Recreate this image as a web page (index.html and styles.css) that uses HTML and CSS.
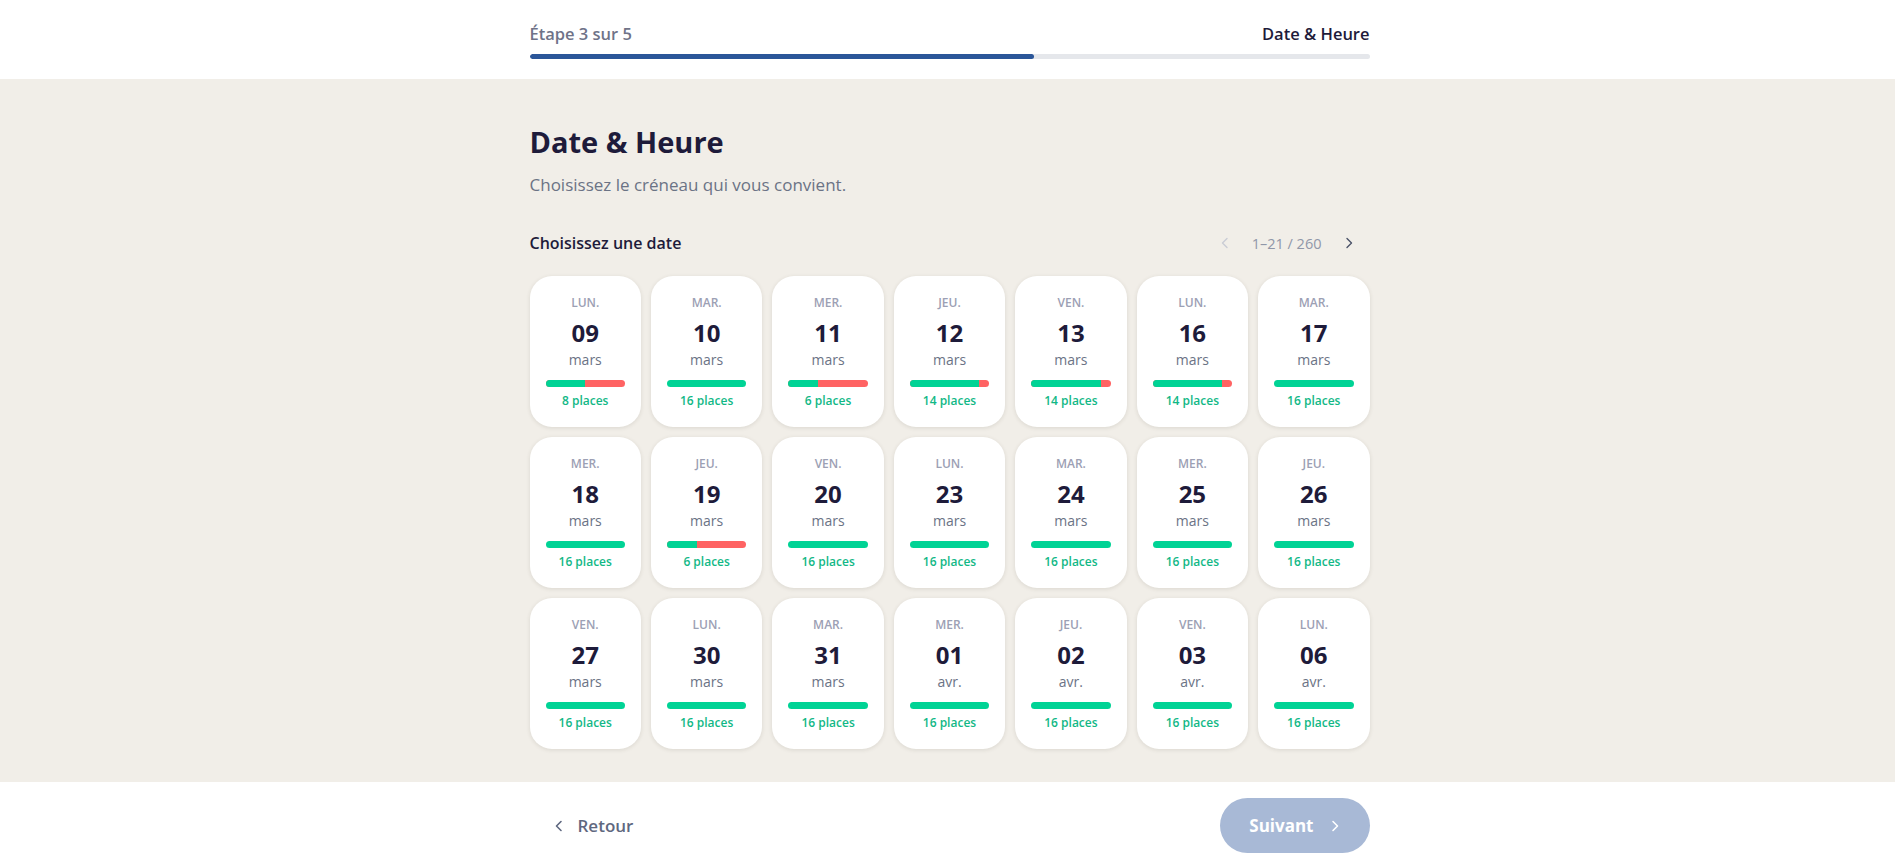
FILE: index.html
```html
<!DOCTYPE html>
<html lang="fr">
<head>
    <meta charset="UTF-8">
    <meta name="viewport" content="width=device-width, initial-scale=1.0">
    <title>Date &amp; Heure</title>
    <link rel="stylesheet" href="styles.css">
</head>
<body>
    <header class="top-bar">
        <div class="container">
            <div class="step-info">
                <span class="step-count">Étape 3 sur 5</span>
                <span class="step-name">Date &amp; Heure</span>
            </div>
            <div class="progress">
                <div class="progress-fill" style="width: 60%"></div>
            </div>
        </div>
    </header>

    <main class="content">
        <div class="container">
            <h1>Date &amp; Heure</h1>
            <p class="subtitle">Choisissez le créneau qui vous convient.</p>

            <div class="section-head">
                <h2>Choisissez une date</h2>
                <div class="pager">
                    <button class="pager-btn disabled" aria-label="Précédent">
                        <svg width="14" height="14" viewBox="0 0 14 14"><polyline points="9,2.5 4.5,7 9,11.5" fill="none" stroke="currentColor" stroke-width="1.4" stroke-linecap="round" stroke-linejoin="round"/></svg>
                    </button>
                    <span class="pager-count">1–21 / 260</span>
                    <button class="pager-btn" aria-label="Suivant">
                        <svg width="14" height="14" viewBox="0 0 14 14"><polyline points="5,2.5 9.5,7 5,11.5" fill="none" stroke="currentColor" stroke-width="1.4" stroke-linecap="round" stroke-linejoin="round"/></svg>
                    </button>
                </div>
            </div>

            <div class="date-grid">
                <div class="date-card"><span class="day">Lun.</span><span class="num">09</span><span class="month">mars</span><div class="bar"><div class="bar-free" style="width: 50%"></div></div><span class="places">8 places</span></div>
                <div class="date-card"><span class="day">Mar.</span><span class="num">10</span><span class="month">mars</span><div class="bar"><div class="bar-free" style="width: 100%"></div></div><span class="places">16 places</span></div>
                <div class="date-card"><span class="day">Mer.</span><span class="num">11</span><span class="month">mars</span><div class="bar"><div class="bar-free" style="width: 37.5%"></div></div><span class="places">6 places</span></div>
                <div class="date-card"><span class="day">Jeu.</span><span class="num">12</span><span class="month">mars</span><div class="bar"><div class="bar-free" style="width: 87.5%"></div></div><span class="places">14 places</span></div>
                <div class="date-card"><span class="day">Ven.</span><span class="num">13</span><span class="month">mars</span><div class="bar"><div class="bar-free" style="width: 87.5%"></div></div><span class="places">14 places</span></div>
                <div class="date-card"><span class="day">Lun.</span><span class="num">16</span><span class="month">mars</span><div class="bar"><div class="bar-free" style="width: 87.5%"></div></div><span class="places">14 places</span></div>
                <div class="date-card"><span class="day">Mar.</span><span class="num">17</span><span class="month">mars</span><div class="bar"><div class="bar-free" style="width: 100%"></div></div><span class="places">16 places</span></div>

                <div class="date-card"><span class="day">Mer.</span><span class="num">18</span><span class="month">mars</span><div class="bar"><div class="bar-free" style="width: 100%"></div></div><span class="places">16 places</span></div>
                <div class="date-card"><span class="day">Jeu.</span><span class="num">19</span><span class="month">mars</span><div class="bar"><div class="bar-free" style="width: 37.5%"></div></div><span class="places">6 places</span></div>
                <div class="date-card"><span class="day">Ven.</span><span class="num">20</span><span class="month">mars</span><div class="bar"><div class="bar-free" style="width: 100%"></div></div><span class="places">16 places</span></div>
                <div class="date-card"><span class="day">Lun.</span><span class="num">23</span><span class="month">mars</span><div class="bar"><div class="bar-free" style="width: 100%"></div></div><span class="places">16 places</span></div>
                <div class="date-card"><span class="day">Mar.</span><span class="num">24</span><span class="month">mars</span><div class="bar"><div class="bar-free" style="width: 100%"></div></div><span class="places">16 places</span></div>
                <div class="date-card"><span class="day">Mer.</span><span class="num">25</span><span class="month">mars</span><div class="bar"><div class="bar-free" style="width: 100%"></div></div><span class="places">16 places</span></div>
                <div class="date-card"><span class="day">Jeu.</span><span class="num">26</span><span class="month">mars</span><div class="bar"><div class="bar-free" style="width: 100%"></div></div><span class="places">16 places</span></div>

                <div class="date-card"><span class="day">Ven.</span><span class="num">27</span><span class="month">mars</span><div class="bar"><div class="bar-free" style="width: 100%"></div></div><span class="places">16 places</span></div>
                <div class="date-card"><span class="day">Lun.</span><span class="num">30</span><span class="month">mars</span><div class="bar"><div class="bar-free" style="width: 100%"></div></div><span class="places">16 places</span></div>
                <div class="date-card"><span class="day">Mar.</span><span class="num">31</span><span class="month">mars</span><div class="bar"><div class="bar-free" style="width: 100%"></div></div><span class="places">16 places</span></div>
                <div class="date-card"><span class="day">Mer.</span><span class="num">01</span><span class="month">avr.</span><div class="bar"><div class="bar-free" style="width: 100%"></div></div><span class="places">16 places</span></div>
                <div class="date-card"><span class="day">Jeu.</span><span class="num">02</span><span class="month">avr.</span><div class="bar"><div class="bar-free" style="width: 100%"></div></div><span class="places">16 places</span></div>
                <div class="date-card"><span class="day">Ven.</span><span class="num">03</span><span class="month">avr.</span><div class="bar"><div class="bar-free" style="width: 100%"></div></div><span class="places">16 places</span></div>
                <div class="date-card"><span class="day">Lun.</span><span class="num">06</span><span class="month">avr.</span><div class="bar"><div class="bar-free" style="width: 100%"></div></div><span class="places">16 places</span></div>
            </div>
        </div>
    </main>

    <footer class="bottom-bar">
        <div class="container footer-row">
            <button class="btn-back">
                <svg width="14" height="14" viewBox="0 0 14 14"><polyline points="9,2.5 4.5,7 9,11.5" fill="none" stroke="currentColor" stroke-width="1.6" stroke-linecap="round" stroke-linejoin="round"/></svg>
                Retour
            </button>
            <button class="btn-next" disabled>
                Suivant
                <svg width="14" height="14" viewBox="0 0 14 14"><polyline points="5,2.5 9.5,7 5,11.5" fill="none" stroke="currentColor" stroke-width="1.6" stroke-linecap="round" stroke-linejoin="round"/></svg>
            </button>
        </div>
    </footer>
</body>
</html>
```

FILE: styles.css
```css
* {
    margin: 0;
    padding: 0;
    box-sizing: border-box;
    font-family: "Open Sans", "Noto Sans", Arial, sans-serif;
}

body {
    background-color: #ffffff;
    color: #1e1b3a;
}

.container {
    width: 840px;
    margin-left: calc(50% - 418px);
}

/* Top progress */
.top-bar {
    height: 79px;
    padding-top: 21px;
    background-color: #ffffff;
}

.step-info {
    display: flex;
    justify-content: space-between;
    align-items: center;
    height: 24px;
    font-size: 16.5px;
}

.step-count {
    color: #6f7388;
    font-weight: 600;
}

.step-name {
    color: #1e1b3a;
    font-weight: 600;
}

.progress {
    margin-top: 9px;
    height: 5px;
    background-color: #e5e7eb;
    border-radius: 3px;
    overflow: hidden;
}

.progress-fill {
    height: 100%;
    background-color: #2b5699;
    border-radius: 3px;
}

/* Main */
.content {
    background-color: #f1eee8;
    height: 703px;
    padding-top: 45px;
}

h1 {
    font-size: 29px;
    font-weight: 700;
    line-height: 36px;
    color: #1e1b3a;
}

.subtitle {
    margin-top: 13px;
    font-size: 17px;
    line-height: 24px;
    color: #6b7385;
}

.section-head {
    display: flex;
    justify-content: space-between;
    align-items: center;
    margin-top: 34px;
    height: 24px;
}

h2 {
    font-size: 16px;
    font-weight: 600;
    color: #1e1b3a;
}

.pager {
    display: flex;
    align-items: center;
    gap: 17px;
    margin-right: 11px;
}

.pager-btn {
    display: flex;
    align-items: center;
    justify-content: center;
    width: 20px;
    height: 20px;
    border: none;
    background: none;
    color: #4b5368;
    cursor: pointer;
}

.pager-btn.disabled {
    color: #c9ccd4;
}

.pager-count {
    font-size: 14.5px;
    color: #9097a8;
}

/* Date cards */
.date-grid {
    display: grid;
    grid-template-columns: repeat(7, 1fr);
    gap: 10px 10px;
    margin-top: 21px;
}

.date-card {
    display: flex;
    flex-direction: column;
    align-items: center;
    height: 151px;
    padding: 19px 16px 0;
    background-color: #ffffff;
    border-radius: 22px;
    box-shadow: 0 1px 4px rgba(60, 50, 30, 0.12);
}

.day {
    font-size: 12px;
    line-height: 16px;
    font-weight: 600;
    color: #9ca0b4;
    text-transform: uppercase;
}

.num {
    margin-top: 7px;
    font-size: 24px;
    line-height: 30px;
    font-weight: 700;
    color: #1e1b3a;
}

.month {
    margin-top: 2px;
    font-size: 14px;
    line-height: 20px;
    color: #6b7385;
}

.bar {
    width: 100%;
    height: 7px;
    margin-top: 10px;
    background-color: #ff6363;
    border-radius: 4px;
    overflow: hidden;
}

.bar-free {
    height: 100%;
    background-color: #00d395;
}

.places {
    margin-top: 6px;
    font-size: 12px;
    line-height: 16px;
    font-weight: 600;
    color: #12b886;
}

/* Footer */
.bottom-bar {
    height: 81px;
    padding-top: 6px;
    background-color: #ffffff;
}

.footer-row {
    display: flex;
    justify-content: space-between;
    align-items: center;
    height: 100%;
}

.btn-back {
    display: flex;
    align-items: center;
    gap: 12px;
    margin-left: 22px;
    border: none;
    background: none;
    font-size: 17px;
    font-weight: 600;
    color: #5f6880;
    cursor: pointer;
}

.btn-next {
    display: flex;
    align-items: center;
    gap: 14px;
    height: 55px;
    padding: 0 28px 0 29px;
    border: none;
    border-radius: 28px;
    background-color: #a8b9d6;
    font-size: 17px;
    font-weight: 700;
    color: #ffffff;
}
```
